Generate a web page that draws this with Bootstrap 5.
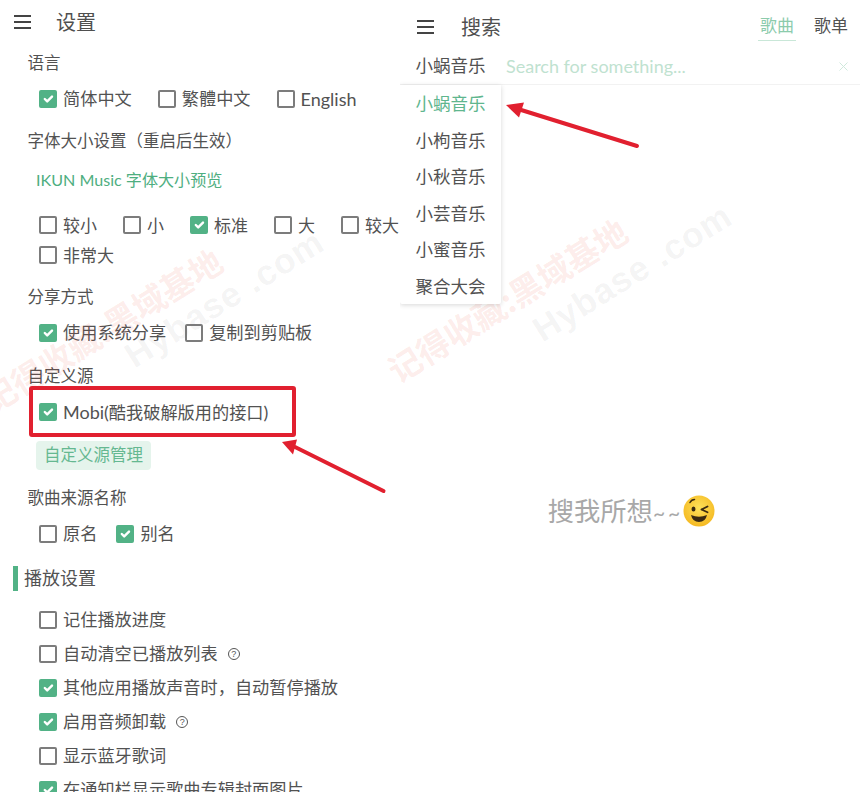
<!DOCTYPE html>
<html lang="zh-CN">
<head>
<meta charset="utf-8">
<title>设置</title>
<link href="https://cdn.jsdelivr.net/npm/bootstrap@5.3.0/dist/css/bootstrap.min.css" rel="stylesheet">
<style>
html,body{height:792px;overflow:hidden;background:#fff}
body{font-family:"Lato","Noto Sans CJK SC",sans-serif;color:#525252;font-size:16.5px;position:relative}
.stage{height:792px}
.pane-left{width:400px;height:792px;flex:none;overflow:hidden}
.pane-right{width:460px;height:792px;flex:none;position:relative;overflow:hidden}
.burger{width:17px;flex:none}
.burger i{display:block;height:2px;background:#444;margin-bottom:4px}
.burger i:last-child{margin-bottom:0}
.top-left{height:44px;padding-left:14px;gap:25px}
.top-right{height:54px;padding-left:17px;gap:27px}
.page-title{font-size:20px;line-height:1;color:#4f4f4f}
.top-left .page-title{padding-bottom:1px}
.sec-title{height:30px;line-height:30px;padding-left:27.500px}
.t-lang{margin-top:4px}.t-font{margin-top:10px}.t-share{margin-top:12px}.t-src{margin-top:11px}.t-name{margin-top:13px}
.opts{padding-left:39px;margin-top:4px;height:34px;column-gap:26px}
.opts-wrap{padding-left:39px;margin-top:13px;column-gap:26px}
.opts-wrap .opt{height:30px;font-size:17px}
.opts-tight{column-gap:19px}
.opts-row{padding-left:39px;height:34px}
.opt{gap:6px;font-size:17.2px;line-height:1;white-space:nowrap}
.latin{font-size:18px}
.form-check-input.box{width:18px;height:18px;margin:0;border:2px solid #7c7c7c;border-radius:2px;flex:none;background-size:16px;box-shadow:none}
.form-check-input.box:checked{background-color:#52b286;border-color:#52b286}
.preview{margin-top:7px;height:34px;line-height:34px;padding-left:36px;color:#4eae80;font-size:16.100px}
.btn.btn-src{margin:12px 0 0 36px;height:29px;width:115px;padding:0;font-size:16.5px;line-height:29px;background:#e5f4ec;color:#65b891;border:0;border-radius:4px;display:block}
.play-head{margin-top:15px;height:25px;gap:6px;font-size:18px;line-height:25px;padding-left:13px}
.play-head::before{content:"";width:5px;height:25px;background:#52b286}
.play-list{margin-top:12px}
.tip{width:12px;height:12px;border:1px solid #555;border-radius:50%;font-size:9px;line-height:10px;text-align:center;margin-left:10px;flex:none;color:#555;font-family:"Liberation Sans",sans-serif}
.tabs{margin-left:auto;padding-right:12px;gap:20px;align-self:stretch}
.nav-link.tab{padding:0;height:41px;line-height:52px;margin-top:0;font-size:17px;color:#525252;width:34px;text-align:center;white-space:nowrap}
.nav-link.tab.on{color:#8ccbac;position:relative}
.nav-link.tab.on::after{content:"";position:absolute;left:-2px;right:-2px;bottom:0;height:1px;background:#c9e7d8}
.search-row{height:31px;padding-bottom:6px;border-bottom:1px solid #f2f2f2;position:relative}
.src-pick{width:106px;padding-left:15.500px;font-size:17.5px;flex:none;line-height:24px;white-space:nowrap}
.search-input{border:0;outline:0;padding:0;flex:1;min-width:0;font:inherit;font-size:18px;background:transparent;line-height:24px}
.search-input::placeholder{color:#bfe2d0;opacity:1}
.clear-x{width:9px;height:9px;margin-right:12px;flex:none}
.dropdown-menu.src-menu{top:31px;left:0;min-width:0;width:101px;height:219px;padding:1px 0 0;margin:0;border:0;border-radius:0 0 2px 2px;box-shadow:0 1px 5px rgba(0,0,0,.16);display:block}
.src-menu .dropdown-item{height:36.5px;line-height:36.5px;padding:0 0 0 15.500px;font-size:17.5px;color:#525252;white-space:nowrap;background:none}
.src-menu .dropdown-item.active{color:#5fb68e}
.empty-msg{padding-top:410px;padding-left:3px;font-size:26.300px;color:#a8a8a8;line-height:1}
.empty-msg .tilde{font-size:21px;letter-spacing:3px}
.wm{position:absolute;font-weight:700;transform:translate(-50%,-50%) rotate(-32deg);white-space:nowrap;pointer-events:none;line-height:1}
.wm-red{color:rgba(238,80,60,.11);font-size:33px;font-family:"Noto Sans CJK SC",sans-serif}
.wm-gray{color:rgba(110,110,110,.08);font-size:35px;font-family:"Liberation Sans",sans-serif;letter-spacing:1px}
.w1{left:507px;top:300px}.w2{left:632px;top:272px}.w3{left:102px;top:330px}.w4{left:224px;top:298px}
.marks{position:absolute;left:0;top:0;pointer-events:none}
</style>
</head>
<body>
<div class="stage d-flex">
  <div class="pane-left">
    <div class="top-left d-flex align-items-center">
      <div class="burger"><i></i><i></i><i></i></div>
      <div class="page-title">设置</div>
    </div>
    <div class="sec-title t-lang">语言</div>
    <div class="opts d-flex align-items-center">
      <label class="opt d-flex align-items-center"><input class="form-check-input box" type="checkbox" checked>简体中文</label>
      <label class="opt d-flex align-items-center"><input class="form-check-input box" type="checkbox">繁體中文</label>
      <label class="opt d-flex align-items-center"><input class="form-check-input box" type="checkbox"><span class="latin">English</span></label>
    </div>
    <div class="sec-title t-font">字体大小设置（重启后生效）</div>
    <div class="preview">IKUN Music 字体大小预览</div>
    <div class="opts-wrap d-flex flex-wrap align-items-center">
      <label class="opt d-flex align-items-center"><input class="form-check-input box" type="checkbox">较小</label>
      <label class="opt d-flex align-items-center"><input class="form-check-input box" type="checkbox">小</label>
      <label class="opt d-flex align-items-center"><input class="form-check-input box" type="checkbox" checked>标准</label>
      <label class="opt d-flex align-items-center"><input class="form-check-input box" type="checkbox">大</label>
      <label class="opt d-flex align-items-center"><input class="form-check-input box" type="checkbox">较大</label>
      <label class="opt d-flex align-items-center"><input class="form-check-input box" type="checkbox">非常大</label>
    </div>
    <div class="sec-title t-share">分享方式</div>
    <div class="opts opts-tight d-flex align-items-center">
      <label class="opt d-flex align-items-center"><input class="form-check-input box" type="checkbox" checked>使用系统分享</label>
      <label class="opt d-flex align-items-center"><input class="form-check-input box" type="checkbox">复制到剪贴板</label>
    </div>
    <div class="sec-title t-src">自定义源</div>
    <div class="opts d-flex align-items-center">
      <label class="opt d-flex align-items-center"><input class="form-check-input box" type="checkbox" checked><span><span class="latin">Mobi(</span>酷我破解版用的接口<span class="latin">)</span></span></label>
    </div>
    <button type="button" class="btn btn-src">自定义源管理</button>
    <div class="sec-title t-name">歌曲来源名称</div>
    <div class="opts opts-tight d-flex align-items-center">
      <label class="opt d-flex align-items-center"><input class="form-check-input box" type="checkbox">原名</label>
      <label class="opt d-flex align-items-center"><input class="form-check-input box" type="checkbox" checked>别名</label>
    </div>
    <div class="play-head d-flex">播放设置</div>
    <div class="play-list">
      <div class="opts-row d-flex align-items-center"><label class="opt d-flex align-items-center"><input class="form-check-input box" type="checkbox">记住播放进度</label></div>
      <div class="opts-row d-flex align-items-center"><label class="opt d-flex align-items-center"><input class="form-check-input box" type="checkbox">自动清空已播放列表</label><span class="tip">?</span></div>
      <div class="opts-row d-flex align-items-center"><label class="opt d-flex align-items-center"><input class="form-check-input box" type="checkbox" checked>其他应用播放声音时，自动暂停播放</label></div>
      <div class="opts-row d-flex align-items-center"><label class="opt d-flex align-items-center"><input class="form-check-input box" type="checkbox" checked>启用音频卸载</label><span class="tip">?</span></div>
      <div class="opts-row d-flex align-items-center"><label class="opt d-flex align-items-center"><input class="form-check-input box" type="checkbox">显示蓝牙歌词</label></div>
      <div class="opts-row d-flex align-items-center"><label class="opt d-flex align-items-center"><input class="form-check-input box" type="checkbox" checked>在通知栏显示歌曲专辑封面图片</label></div>
    </div>
  </div>
  <div class="pane-right">
    <div class="top-right d-flex align-items-center">
      <div class="burger"><i></i><i></i><i></i></div>
      <div class="page-title">搜索</div>
      <nav class="tabs nav flex-nowrap">
        <a class="nav-link tab on" href="#">歌曲</a>
        <a class="nav-link tab" href="#">歌单</a>
      </nav>
    </div>
    <div class="search-row d-flex align-items-center">
      <div class="src-pick">小蜗音乐</div>
      <input class="search-input" type="text" placeholder="Search for something...">
      <svg class="clear-x" viewBox="0 0 9 9"><path d="M.5.5l8 8M8.5.5l-8 8" stroke="#cfe9dc" stroke-width="1" fill="none"/></svg>
      <div class="dropdown-menu show src-menu">
        <a class="dropdown-item active" href="#">小蜗音乐</a>
        <a class="dropdown-item" href="#">小枸音乐</a>
        <a class="dropdown-item" href="#">小秋音乐</a>
        <a class="dropdown-item" href="#">小芸音乐</a>
        <a class="dropdown-item" href="#">小蜜音乐</a>
        <a class="dropdown-item" href="#">聚合大会</a>
      </div>
    </div>
    <div class="empty-msg d-flex align-items-center justify-content-center">
      <span>搜我所想<span class="tilde">~~</span></span>
      <svg width="32" height="32" viewBox="0 0 32 32">
        <defs><radialGradient id="face" cx="50%" cy="40%" r="60%"><stop offset="0" stop-color="#fde15a"/><stop offset="1" stop-color="#f5b921"/></radialGradient></defs>
        <circle cx="16" cy="16" r="15.5" fill="url(#face)"/>
        <ellipse cx="10.5" cy="14" rx="2" ry="2.6" fill="#3a2a12"/>
        <path d="M18.5 14.5l6-3M18.5 14.5l6 2.8" stroke="#3a2a12" stroke-width="1.8" fill="none" stroke-linecap="round"/>
        <path d="M7 7.5q1.500-3 4.500-3" stroke="#3a2a12" stroke-width="1.500" fill="none" stroke-linecap="round"/>
        <path d="M8 20q8 3.500 16 0q-1.500 7-8 7t-8-7z" fill="#3a2a12"/>
      </svg>
    </div>
  </div>
</div>
<div class="wm wm-red w1">记得收藏:黑域基地</div>
<div class="wm wm-gray w2">Hybase .com</div>
<div class="wm wm-red w3">记得收藏:黑域基地</div>
<div class="wm wm-gray w4">Hybase .com</div>
<svg class="marks" width="860" height="792" viewBox="0 0 860 792" aria-hidden="true">
  <rect x="31" y="388" width="263" height="47" rx="1" fill="none" stroke="#e1202f" stroke-width="4"/>
  <path d="M383.500 491L295 447" stroke="#e1202f" stroke-width="4" stroke-linecap="round"/>
  <path d="M282 442L297 439.500L293 454.500z" fill="#e1202f"/>
  <path d="M637 146L518 109" stroke="#e1202f" stroke-width="4" stroke-linecap="round"/>
  <path d="M506 105L524 102.500L519 117.500z" fill="#e1202f"/>
</svg>
<script src="https://cdn.jsdelivr.net/npm/bootstrap@5.3.0/dist/js/bootstrap.bundle.min.js"></script>
</body>
</html>
